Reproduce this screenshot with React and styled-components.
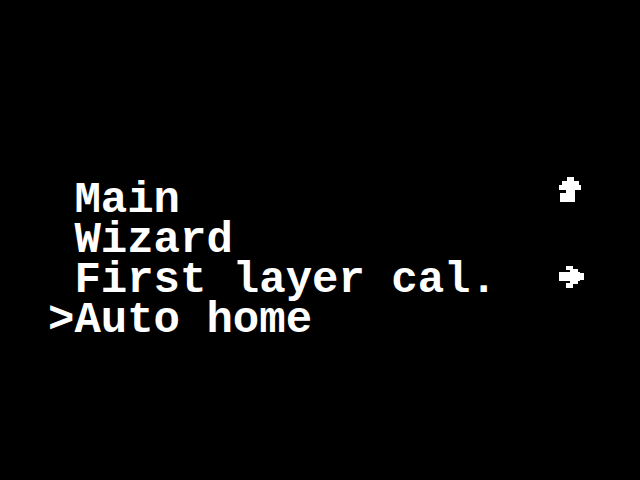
import React from 'react';
import styled, { createGlobalStyle } from 'styled-components';

const Global = createGlobalStyle`
  html, body { margin: 0; padding: 0; background: #000; }
  body { width: 640px; height: 480px; overflow: hidden; }
`;

const Screen = styled.div`
  width: 640px;
  height: 480px;
  box-sizing: border-box;
  background: #000;
  padding: 180px 0 0 48px;
  display: flex;
  flex-direction: column;
  font-family: "Liberation Mono", "DejaVu Sans Mono", monospace;
  font-weight: 700;
  font-size: 44px;
  line-height: 40px;
  color: #fff;
`;

const Row = styled.div`
  display: flex;
  align-items: flex-start;
  height: 40px;
  white-space: pre;
`;

const Cursor = styled.span`
  flex: none;
  width: 1ch;
`;

const Label = styled.span`
  flex: none;
  width: 18ch;
`;

const Icon = styled.svg`
  flex: none;
  margin-left: 9px;
  overflow: visible;
  fill: #fff;
`;

const UpLevel = () => (
  <Icon width="30" height="40" viewBox="0 0 30 40">
    <rect x="8" y="-3" width="7" height="5" />
    <rect x="3" y="1" width="17" height="5" />
    <rect x="0" y="5" width="22" height="5" />
    <rect x="7" y="9" width="9" height="5" />
    <rect x="1" y="13" width="15" height="9" />
  </Icon>
);

const ArrowRight = () => (
  <Icon width="30" height="40" viewBox="0 0 30 40">
    <rect x="7" y="6" width="7" height="4" />
    <rect x="11" y="9" width="8" height="4" />
    <rect x="0" y="12" width="21" height="9" />
    <rect x="19" y="13" width="6" height="7" />
    <rect x="11" y="20" width="8" height="4" />
    <rect x="7" y="23" width="7" height="5" />
  </Icon>
);

const items = [
  { label: 'Main', icon: <UpLevel /> },
  { label: 'Wizard' },
  { label: 'First layer cal.', icon: <ArrowRight /> },
  { label: 'Auto home', selected: true },
];

export default function App() {
  return (
    <>
      <Global />
      <Screen>
        {items.map((it) => (
          <Row key={it.label}>
            <Cursor>{it.selected ? '>' : ' '}</Cursor>
            <Label>{it.label}</Label>
            {it.icon}
          </Row>
        ))}
      </Screen>
    </>
  );
}
